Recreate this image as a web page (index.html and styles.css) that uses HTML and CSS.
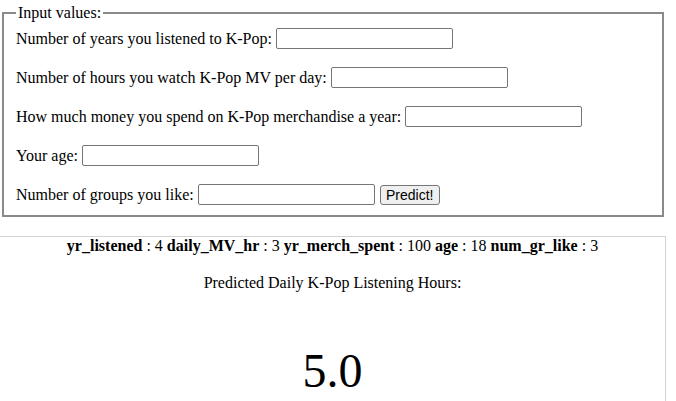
FILE: index.html
```html
<!DOCTYPE html>
<html>
<head>
<meta charset="utf-8">
<link rel="stylesheet" href="styles.css">
</head>
<body>
<form class="form">
  <fieldset class="box">
    <legend class="legend">Input values:</legend>
    <div class="row"><label>Number of years you listened to K-Pop:</label><input class="field" type="text"></div>
    <div class="row"><label>Number of hours you watch K-Pop MV per day:</label><input class="field" type="text"></div>
    <div class="row"><label>How much money you spend on K-Pop merchandise a year:</label><input class="field" type="text"></div>
    <div class="row"><label>Your age:</label><input class="field" type="text"></div>
    <div class="row last"><label>Number of groups you like:</label><input class="field" type="text"><button class="btn" type="button">Predict!</button></div>
  </fieldset>
</form>
<div class="result">
  <p class="vals"><b>yr_listened</b> : 4 <b>daily_MV_hr</b> : 3 <b>yr_merch_spent</b> : 100 <b>age</b> : 18 <b>num_gr_like</b> : 3</p>
  <p class="caption">Predicted Daily K-Pop Listening Hours:</p>
  <p class="big">5.0</p>
</div>
</body>
</html>
```
FILE: styles.css
```css
html, body {
  margin: 0;
  padding: 0;
  background: #fff;
  overflow: hidden;
}
body {
  font-family: "Liberation Serif", "Times New Roman", serif;
  font-size: 16px;
  color: #000;
  width: 676px;
  height: 401px;
}
.form {
  margin: 0;
  padding-top: 4px;
}
.box {
  margin: 0 0 0 2px;
  width: 662px;
  box-sizing: border-box;
  border: 2px solid #8a8a8a;
  padding: 6px 12px 10px 12px;
}
.legend {
  padding: 0 2px;
  line-height: 18px;
}
.row {
  display: flex;
  align-items: center;
  height: 21px;
  margin-bottom: 18px;
  white-space: nowrap;
}
.row.last {
  margin-bottom: 0;
}
.row label {
  margin-right: 4px;
}
.field {
  width: 177px;
  height: 21px;
  box-sizing: border-box;
  border: 1px solid #767676;
  border-radius: 2px;
  padding: 1px 2px;
  margin: 0;
  font: 13px Arial, sans-serif;
}
.btn {
  margin-left: 5px;
  width: 60px;
  height: 20px;
  box-sizing: border-box;
  padding: 0;
  border: 1px solid #767676;
  border-radius: 3px;
  background: #efefef;
  font: 14px "Liberation Sans", Arial, sans-serif;
  color: #000;
}
.result {
  margin-top: 19px;
  width: 666px;
  height: 166px;
  box-sizing: border-box;
  border-top: 1px solid #d3d3d3;
  border-right: 1px solid #d3d3d3;
  text-align: center;
}
.result p {
  margin: 0;
  line-height: 18px;
}
.caption {
  margin-top: 19px !important;
}
.big {
  font-size: 48px;
  line-height: 55px !important;
  margin-top: 51px !important;
}
```
